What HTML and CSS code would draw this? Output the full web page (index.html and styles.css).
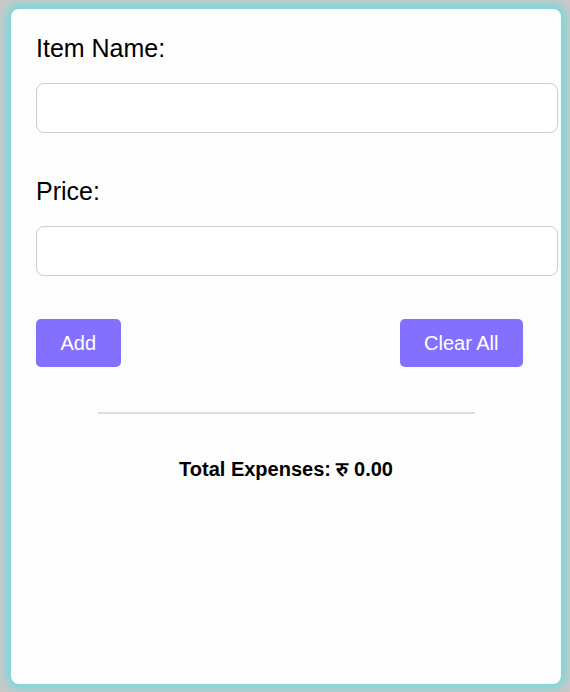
FILE: index.html
```html
<!DOCTYPE html>
<html lang="en">
<head>
<meta charset="utf-8">
<title>Expense Tracker</title>
<link rel="stylesheet" href="styles.css">
</head>
<body>
<div class="card">
  <label class="field-label" for="item">Item Name:</label>
  <input class="field-input" id="item" type="text">
  <label class="field-label price-label" for="price">Price:</label>
  <input class="field-input" id="price" type="number">
  <div class="actions">
    <button class="btn">Add</button>
    <button class="btn">Clear All</button>
  </div>
  <hr class="divider">
  <p class="total">Total Expenses: रु 0.00</p>
</div>
</body>
</html>
```

FILE: styles.css
```css
html, body {
  margin: 0;
  padding: 0;
}
body {
  background: #c8c8c8;
  font-family: "Liberation Sans", Arial, sans-serif;
  padding: 9px 9px 8px 11px;
}
.card {
  box-sizing: border-box;
  width: 550px;
  height: 675px;
  background: #fdfdfd;
  border-radius: 8px;
  box-shadow: 0 0 10px 4px #6cdae0;
  padding: 25px 25px 24px;
}
.field-label {
  display: block;
  font-size: 25px;
  color: #000;
  margin-bottom: 20px;
}
.price-label {
  margin-top: 44px;
}
.field-input {
  display: block;
  width: 100%;
  height: 28px;
  padding: 10px;
  border: 1px solid #cccccc;
  border-radius: 8px;
  background: #fff;
  font-size: 16px;
  font-family: inherit;
}
.actions {
  display: flex;
  justify-content: space-between;
  margin-top: 43px;
  padding-right: 13px;
}
.btn {
  background: #8470ff;
  color: #fff;
  border: none;
  border-radius: 5px;
  font-family: "Liberation Sans", Arial, sans-serif;
  font-size: 20px;
  height: 48px;
  padding: 0 24.5px;
}
.divider {
  width: 377px;
  margin: 45px auto 0;
  border: none;
  border-top: 2px solid #dddddd;
  height: 0;
}
.total {
  text-align: center;
  font-weight: bold;
  font-size: 20px;
  margin: 41px 0 0;
}
```
